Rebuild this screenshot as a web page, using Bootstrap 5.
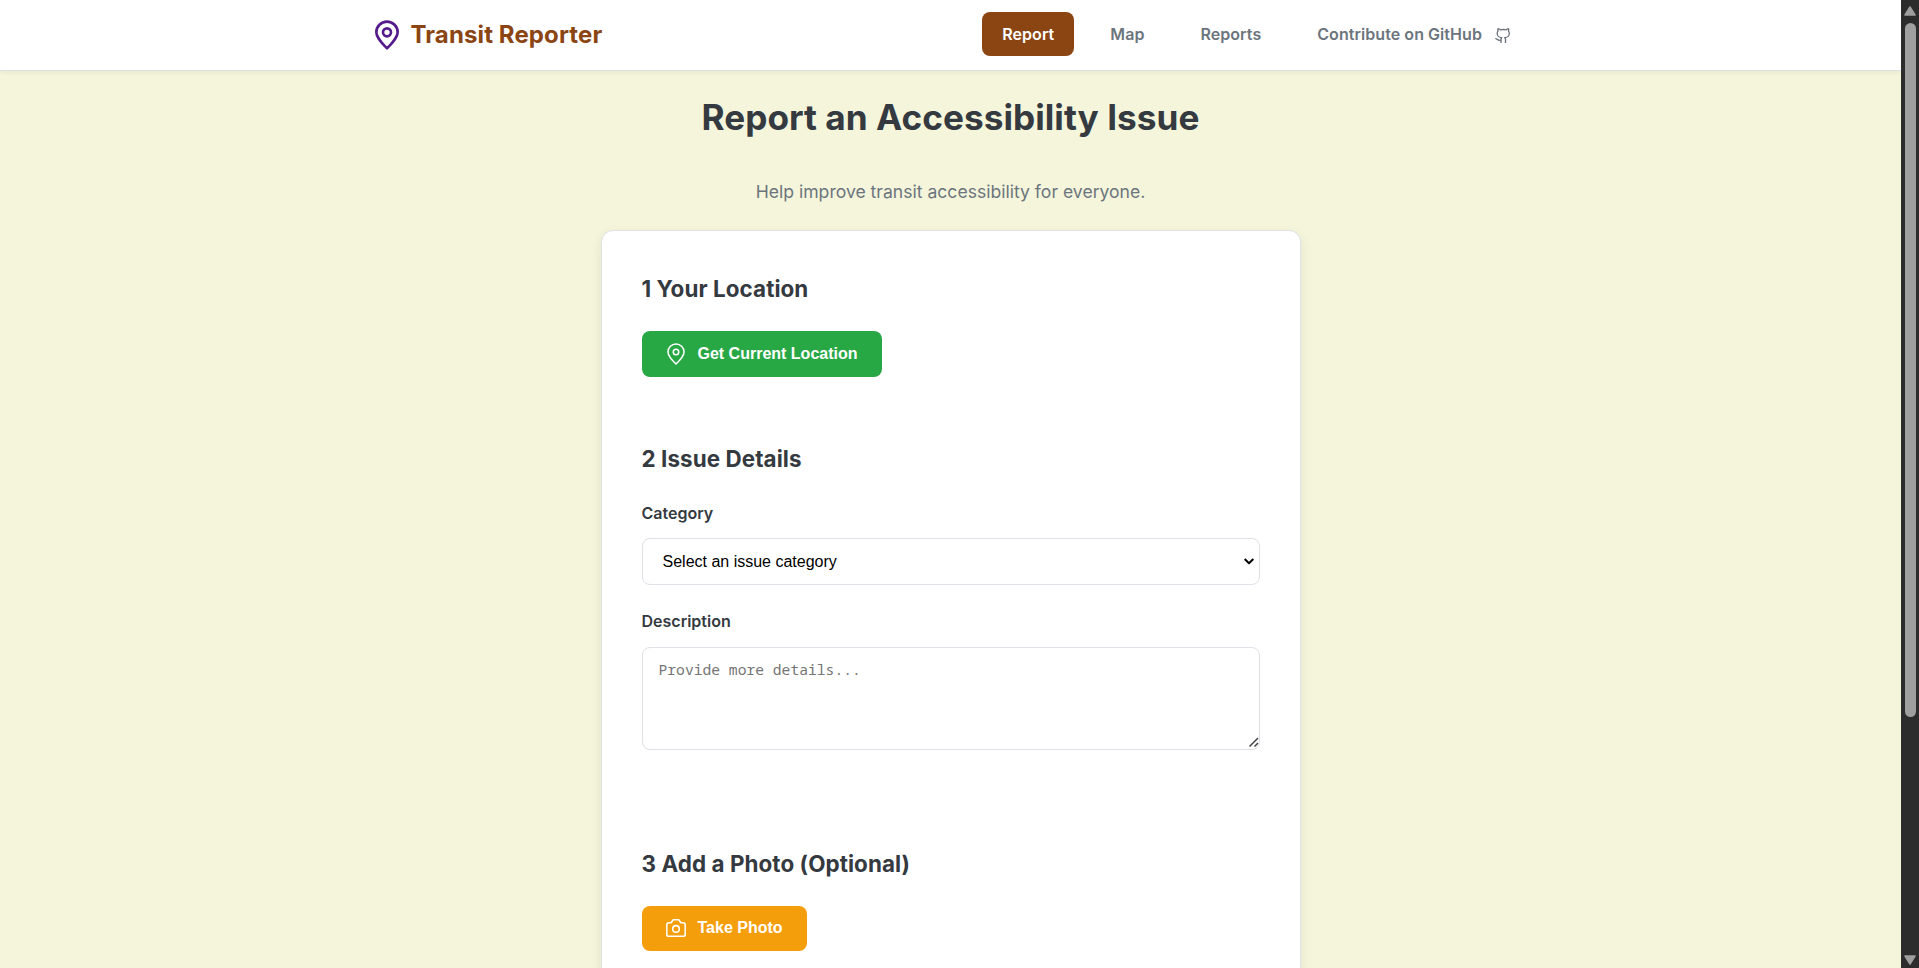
<!DOCTYPE html>
<html lang="en">
<head>
<meta charset="utf-8">
<title>Transit Reporter</title>
<meta name="viewport" content="width=device-width, initial-scale=1">
<link href="https://cdn.jsdelivr.net/npm/bootstrap@5.3.0/dist/css/bootstrap.min.css" rel="stylesheet">
<style>
  html, body { height: 100%; overflow: hidden; }
  body { font-family: Inter, sans-serif; color: #343a40; background: #2c2c2c; line-height: 1.6; }
  svg { fill: none; stroke: currentColor; stroke-width: 1.5; stroke-linecap: round; stroke-linejoin: round; flex: none; }
  .page { background: #f5f5dc; height: 968px; overflow: hidden; min-width: 0; }
  .topbar { height: 71px; background: #fff; border-bottom: 1px solid #dee2e6; box-shadow: 0 2px 4px rgba(0,0,0,.05); padding: 0; position: relative; }
  .wrap { width: 1200px; padding: 0 20px; }
  .brand { color: #8b4513; font-size: 24px; font-weight: 700; gap: 8px; letter-spacing: .12px; }
  .brand svg { color: #551a8b; stroke-width: 2; }
  .topbar .nav { margin-bottom: 2px; }
  .topbar .nav-link { color: #6c757d; font-weight: 600; padding: 2px 20px 0; height: 44px; border-radius: 8px; display: flex; align-items: center; letter-spacing: .06px; }
  .topbar .nav-link.active { background: #8b4513; color: #fff; }
  .octocat { margin: 1px 1px 0 12.5px; stroke-width: 1.8; }
  h1 { font-size: 35.2px; font-weight: 700; line-height: 56px; margin: 18px 0 33px; letter-spacing: .02px; }
  .intro { font-size: 17.6px; line-height: 28px; color: #6c757d; margin-bottom: 24px; letter-spacing: -.01px; }
  .report-card { width: 700px; height: 900px; padding: 40px; border: 1px solid #dee2e6; border-radius: 12px; box-shadow: 0 4px 12px rgba(0,0,0,.08); background: #fff; flex: none; }
  h2 { font-size: 22.4px; font-weight: 700; line-height: 36px; margin: 0 0 24px; letter-spacing: .08px; }
  .action { font: 700 16px "Liberation Sans", Arial, sans-serif; color: #fff; border: 0; border-radius: 8px; height: 46px; padding: 0 0 0 22px; display: inline-flex; align-items: center; gap: 10px; white-space: nowrap; }
  .locate { background: #28a745; width: 240px; }
  .photo { background: #f59e0b; width: 165px; height: 45px; padding-bottom: 1px; }
  .photo svg { margin: 0 1px; stroke-width: 1.7; }
  .form-label { font-weight: 600; line-height: 26px; margin-bottom: 12px; display: block; }
  .pick { display: flex; align-items: center; justify-content: space-between; width: 100%; height: 47px; border: 1px solid #dee2e6; border-radius: 8px; background: #fff; color: #000; font: 16px "Liberation Sans", Arial, sans-serif; padding: 0 5px 0 20px; margin-bottom: 23px; }
  .pick svg { stroke-width: 2; stroke-linecap: butt; }
  .details { display: block; width: 100%; height: 103px; border: 1px solid #dee2e6; border-radius: 8px; padding: 13px 16px; resize: none; font: 14.67px/17px "Noto Sans Mono", "DejaVu Sans Mono", monospace; }
  .details::placeholder { color: #757575; }
  .grip { position: absolute; right: 1px; bottom: 3px; color: #444; stroke-linecap: butt; }
  .scroll { width: 18px; background: #2c2c2c; flex: none; padding: 5px 0 2px; }
  .scroll svg { fill: #9f9f9f; stroke: #9f9f9f; }
  .thumb { width: 11px; height: 694px; margin-top: 7px; border-radius: 6px; background: #9f9f9f; }
</style>
</head>
<body class="d-flex">
<div class="page flex-grow-1">
  <nav class="topbar d-flex justify-content-center">
    <div class="wrap d-flex align-items-center justify-content-between">
      <a class="brand d-flex align-items-center text-decoration-none" href="#">
        <svg width="32" height="32" viewBox="0 0 24 24"><path d="M20 10c0 4.42-8 12-8 12s-8-7.58-8-12a8 8 0 0 1 16 0Z"/><circle cx="12" cy="10" r="3"/></svg>
        Transit Reporter
      </a>
      <div class="nav gap-3">
        <a class="nav-link active" href="#">Report</a>
        <a class="nav-link" href="#">Map</a>
        <a class="nav-link" href="#">Reports</a>
        <a class="nav-link" href="#">Contribute on GitHub
          <svg class="octocat" width="15" height="15.500" viewBox="1 1 20 22" preserveAspectRatio="none"><path d="M15 22v-4a4.800 4.800 0 0 0-1-3.500c3 0 6-2 6-5.500.08-1.250-.27-2.480-1-3.500.28-1.150.28-2.350 0-3.500 0 0-1 0-3 1.500-2.640-.5-5.360-.5-8 0C6 2 5 2 5 2c-.3 1.150-.3 2.350 0 3.500A5.400 5.400 0 0 0 4 9c0 3.500 3 5.500 6 5.500-.39.49-.68 1.050-.85 1.650-.17.6-.22 1.230-.15 1.850v4"/><path d="M9 18c-4.510 2-5-2-7-2"/></svg>
        </a>
      </div>
    </div>
  </nav>
  <main class="d-flex flex-column align-items-center">
    <h1>Report an Accessibility Issue</h1>
    <p class="intro">Help improve transit accessibility for everyone.</p>
    <form class="report-card">
      <section style="height:170px">
        <h2>1 Your Location</h2>
        <button type="button" class="action locate">
          <svg width="24" height="24" viewBox="0 0 24 24"><path d="M20 10c0 4.420-8 12-8 12s-8-7.580-8-12a8 8 0 0 1 16 0Z"/><circle cx="12" cy="10" r="2.750"/></svg>
          Get Current Location
        </button>
      </section>
      <section style="height:405px">
        <h2>2 Issue Details</h2>
        <label class="form-label" style="margin-top:-1px">Category</label>
        <div class="pick" role="combobox">Select an issue category
          <svg width="10" height="7" viewBox="0 0 10 7"><path d="M.7 1 5 5.200 9.300 1"/></svg>
        </div>
        <label class="form-label mb-0" for="details">Description</label>
        <div class="position-relative" style="margin-top:13px">
          <textarea id="details" class="details" placeholder="Provide more details..."></textarea>
          <svg class="grip" width="10" height="10" viewBox="0 0 10 10"><path d="M.5 9.500 9 1M5.500 9.500 9 6"/></svg>
        </div>
      </section>
      <section>
        <h2>3 Add a Photo (Optional)</h2>
        <button type="button" class="action photo">
          <svg width="22" height="22" viewBox="0 0 24 24"><path d="M15 3H9L6.700 6.200H4a2 2 0 0 0-2 2V19a2 2 0 0 0 2 2h16a2 2 0 0 0 2-2V8.200a2 2 0 0 0-2-2h-2.700L15 3z"/><circle cx="12" cy="13" r="3.600"/></svg>
          Take Photo
        </button>
      </section>
    </form>
  </main>
</div>
<div class="scroll d-flex flex-column align-items-center" aria-hidden="true">
  <svg width="12" height="11" viewBox="0 0 12 11"><path d="M6 2 11 10H1Z"/></svg>
  <div class="thumb"></div>
  <svg class="mt-auto" width="12" height="11" viewBox="0 0 12 11"><path d="M6 9 11 1H1Z"/></svg>
</div>
<script src="https://cdn.jsdelivr.net/npm/bootstrap@5.3.0/dist/js/bootstrap.bundle.min.js"></script>
</body>
</html>
